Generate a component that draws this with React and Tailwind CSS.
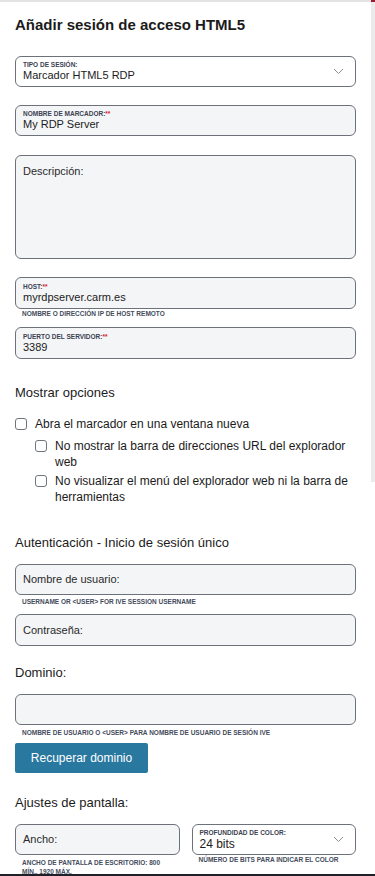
import React from 'react';

const font = { fontFamily: '"Liberation Sans", Arial, sans-serif' };

const Req = () => <span className="text-[#d6262b]">**</span>;

const Chevron = () => (
  <svg width="11" height="7" viewBox="0 0 11 7" className="shrink-0">
    <polyline points="1,1 5.5,5.5 10,1" fill="none" stroke="#8a8f96" strokeWidth="1" />
  </svg>
);

// labelled field (label inside the box, value below it)
const Field = ({ label, value, required, select, className = '' }) => (
  <div
    className={`flex items-center h-[31px] border border-[#6d727a] rounded-[6px] px-[7px] ${
      select ? 'bg-white' : 'bg-[#f4f5f7]'
    } ${className}`}
  >
    <div className="flex-1 min-w-0 flex flex-col">
      <span className="text-[6.5px] leading-[8px] font-bold uppercase text-[#3b4252]">
        {label}
        {required && <Req />}
      </span>
      <span className="text-[11px] leading-[13px] text-[#1b1b1b]">{value}</span>
    </div>
    {select && (
      <div className="pr-[4px]">
        <Chevron />
      </div>
    )}
  </div>
);

const Placeholder = ({ text, className = '' }) => (
  <div
    className={`flex items-center h-[31px] border border-[#6d727a] rounded-[6px] px-[7px] bg-[#f4f5f7] text-[11px] text-[#2a2a2a] ${className}`}
  >
    {text}
  </div>
);

const Helper = ({ children, className = '' }) => (
  <div className={`px-[7px] text-[6.5px] leading-[8px] font-bold uppercase text-[#444c5c] ${className}`}>
    {children}
  </div>
);

const Heading = ({ children, className = '' }) => (
  <div className={`text-[13px] leading-[16px] text-[#1b1b1b] ${className}`}>{children}</div>
);

const Check = ({ children, className = '' }) => (
  <label className={`flex items-start gap-[8px] text-[12px] leading-[16px] text-[#1b1b1b] ${className}`}>
    <span className="mt-[2px] w-[12px] h-[12px] shrink-0 rounded-[3px] border border-[#70757d] bg-white" />
    <span>{children}</span>
  </label>
);

export default function App() {
  return (
    <div className="w-[375px] h-[876px] flex flex-col bg-white overflow-hidden" style={font}>
      <div className="flex h-[2px] shrink-0">
        <div className="flex-1 bg-[#e2e3e5]" />
        <div className="w-[4px] bg-[#9b1c2c]" />
      </div>
      <div className="flex-1 flex min-h-0">
        <div className="flex-1 min-w-0 px-[15px] overflow-hidden">
          <h1 className="pt-[13px] text-[15px] leading-[20px] font-bold text-[#1b1b1b]">
            Añadir sesión de acceso HTML5
          </h1>

          <Field className="mt-[21px] h-[30px]" label="Tipo de sesión:" value="Marcador HTML5 RDP" select />
          <Field className="mt-[18px]" label="Nombre de marcador:" value="My RDP Server" required />

          <div className="mt-[19px] h-[104px] border border-[#6d727a] rounded-[6px] bg-[#f4f5f7] px-[7px] pt-[9px] text-[11px] leading-[13px] text-[#2a2a2a]">
            Descripción:
          </div>

          <Field className="mt-[18px] h-[32px]" label="Host:" value="myrdpserver.carm.es" required />
          <Helper className="mt-[1px]">Nombre o dirección IP de host remoto</Helper>
          <Field className="mt-[9px] h-[32px]" label="Puerto del servidor:" value="3389" required />

          <Heading className="mt-[26px]">Mostrar opciones</Heading>
          <Check className="mt-[15px]">Abra el marcador en una ventana nueva</Check>
          <div className="pl-[20px]">
            <Check className="mt-[6px]">No mostrar la barra de direcciones URL del explorador web</Check>
            <Check className="mt-[3px]">No visualizar el menú del explorador web ni la barra de herramientas</Check>
          </div>

          <Heading className="mt-[30px]">Autenticación - Inicio de sesión único</Heading>
          <Placeholder className="mt-[13px]" text="Nombre de usuario:" />
          <Helper className="mt-[3px]">Username or &lt;user&gt; for IVE session username</Helper>
          <Placeholder className="mt-[8px] h-[32px]" text="Contraseña:" />

          <Heading className="mt-[19px]">Dominio:</Heading>
          <div className="mt-[13px] h-[31px] border border-[#6d727a] rounded-[6px] bg-[#f4f5f7]" />
          <Helper className="mt-[4px]">Nombre de usuario o &lt;user&gt; para nombre de usuario de sesión IVE</Helper>
          <button className="mt-[6px] h-[30px] w-[133px] rounded-[2px] bg-[#2878a0] text-white text-[12px]">
            Recuperar dominio
          </button>

          <Heading className="mt-[22px]">Ajustes de pantalla:</Heading>
          <div className="mt-[13px] grid grid-cols-2 gap-x-[12px]">
            <div>
              <Placeholder text="Ancho:" />
              <Helper className="mt-[3px] leading-[9px]">Ancho de pantalla de escritorio: 800 mín., 1920 máx.</Helper>
            </div>
            <div>
              <div className="flex items-center h-[31px] border border-[#6d727a] rounded-[6px] px-[7px] bg-white">
                <div className="flex-1 flex flex-col">
                  <span className="text-[6.5px] leading-[8px] font-bold uppercase text-[#3b4252]">
                    Profundidad de color:
                  </span>
                  <span className="text-[12px] leading-[14px] text-[#1b1b1b]">24 bits</span>
                </div>
                <div className="pr-[4px]">
                  <Chevron />
                </div>
              </div>
              <Helper className="mt-[1px]">Número de bits para indicar el color</Helper>
            </div>
          </div>
        </div>
        <div className="w-[4px] shrink-0 flex flex-col">
          <div className="h-[480px] bg-[#ebebeb]" />
        </div>
      </div>
      <div className="h-[2px] shrink-0 bg-[#1e1f28]" />
    </div>
  );
}
